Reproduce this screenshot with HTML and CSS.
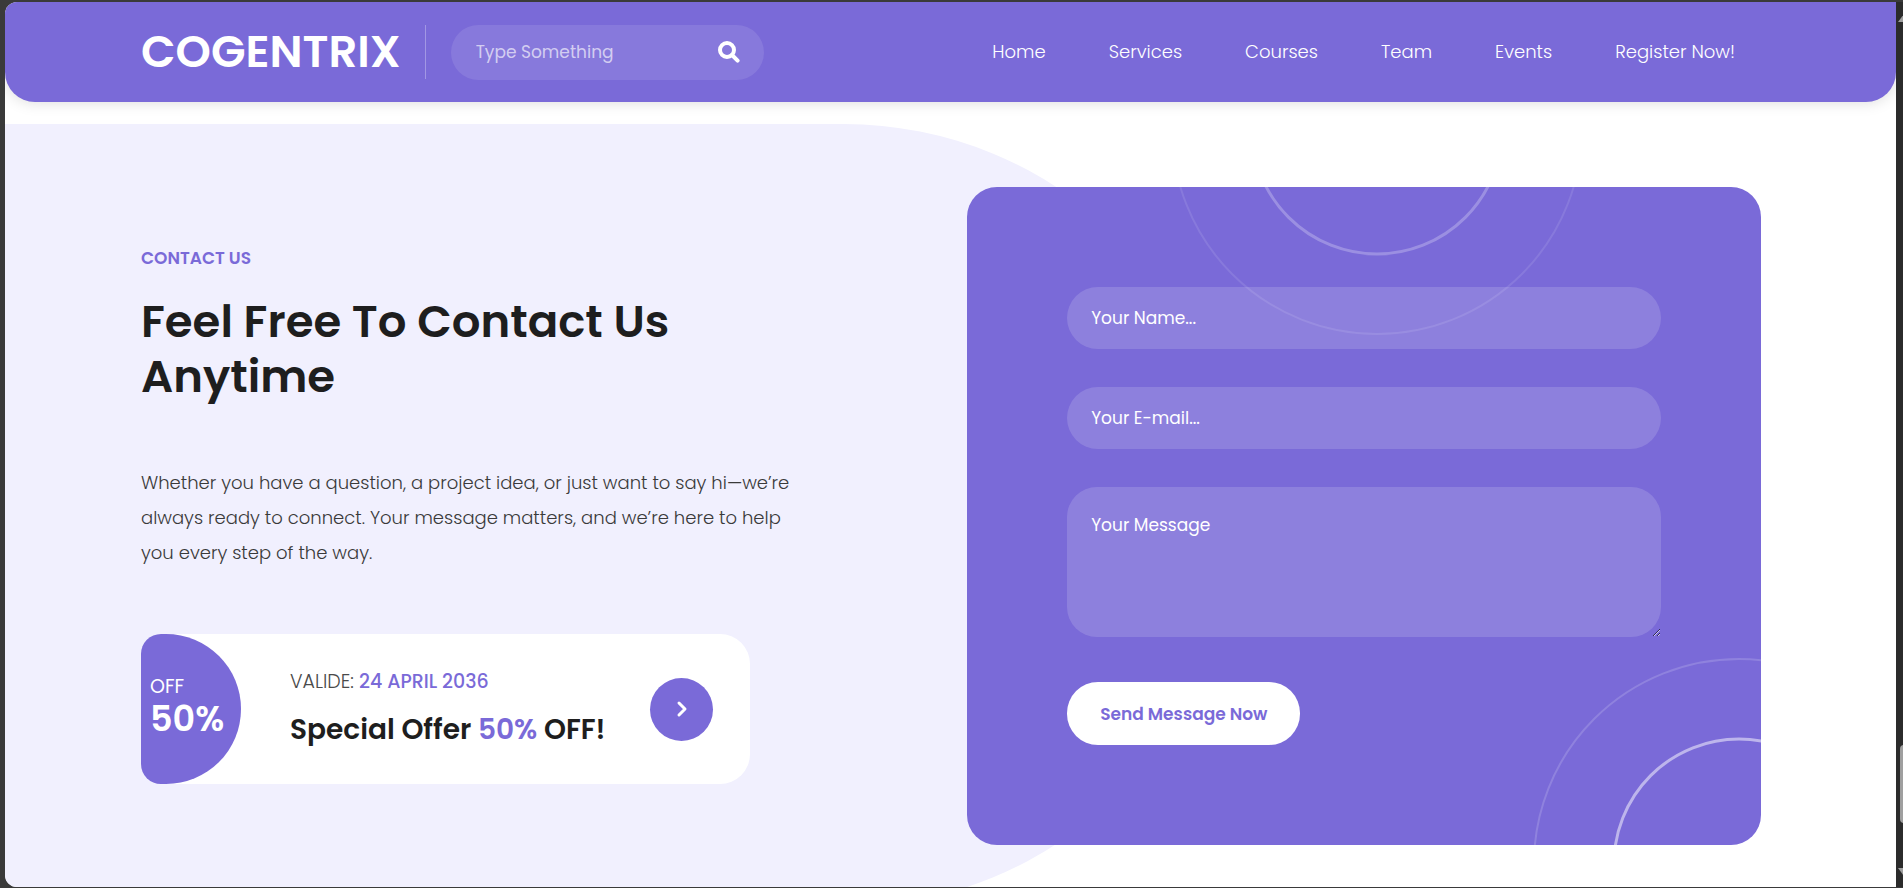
FILE: index.html
```html
<!DOCTYPE html>
<html lang="en">
<head>
<meta charset="utf-8">
<meta name="viewport" content="width=device-width, initial-scale=1">
<title>Cogentrix - Contact Us</title>
<link rel="stylesheet" href="styles.css">
</head>
<body>
<div class="frame">
  <div class="page">
    <header class="header">
      <a class="logo" href="#">COGENTRIX</a>
      <form class="search" role="search">
        <input class="search-input" type="text" placeholder="Type Something" aria-label="Type Something">
        <button class="search-button" type="button" aria-label="Search">
          <svg class="search-icon" viewBox="0 0 22 22" fill="none" stroke="currentColor" aria-hidden="true">
            <circle cx="9" cy="9" r="7" stroke-width="4"/>
            <path d="M14 14l5.6 5.6" stroke-width="4" stroke-linecap="round"/>
          </svg>
        </button>
      </form>
      <nav class="nav" aria-label="Main">
        <a href="#">Home</a>
        <a href="#">Services</a>
        <a href="#">Courses</a>
        <a href="#">Team</a>
        <a href="#">Events</a>
        <a href="#">Register Now!</a>
      </nav>
    </header>

    <main class="contact">
      <section class="intro">
        <h6 class="eyebrow">CONTACT US</h6>
        <h2 class="title">Feel Free To Contact Us Anytime</h2>
        <p class="text">Whether you have a question, a project idea, or just want to say hi—we’re always ready to connect. Your message matters, and we’re here to help you every step of the way.</p>
        <div class="offer">
          <div class="offer-badge">
            <span class="offer-off">OFF</span>
            <strong class="offer-percent">50%</strong>
          </div>
          <div class="offer-info">
            <p class="offer-valid">VALIDE: <em>24 APRIL 2036</em></p>
            <h4 class="offer-title">Special Offer <em>50%</em> OFF!</h4>
          </div>
          <a class="offer-link" href="#" aria-label="View offer">
            <svg class="offer-arrow" viewBox="0 0 12 18" fill="none" stroke="currentColor" stroke-width="3" stroke-linecap="round" stroke-linejoin="round" aria-hidden="true">
              <path d="M3 3l6 6-6 6"/>
            </svg>
          </a>
        </div>
      </section>

      <form class="card">
        <svg class="rings rings-top" viewBox="0 0 416 416" fill="none" stroke="#fff" aria-hidden="true">
          <circle cx="208" cy="208" r="205" stroke-width="2" opacity=".1"/>
          <circle cx="208" cy="208" r="125" stroke-width="3" opacity=".25"/>
        </svg>
        <svg class="rings rings-bottom" viewBox="0 0 416 416" fill="none" stroke="#fff" aria-hidden="true">
          <circle cx="208" cy="208" r="205" stroke-width="2" opacity=".16"/>
          <circle cx="208" cy="208" r="125" stroke-width="3" opacity=".5"/>
        </svg>
        <input class="field" type="text" placeholder="Your Name..." aria-label="Your Name">
        <input class="field" type="email" placeholder="Your E-mail..." aria-label="Your E-mail">
        <textarea class="field field-message" placeholder="Your Message" aria-label="Your Message"></textarea>
        <button class="send" type="button">Send Message Now</button>
      </form>
    </main>
  </div>

  <div class="scrollbar" aria-hidden="true">
    <svg class="scroll-arrow" viewBox="0 0 12 8"><path d="M6 0l6 8H0z"/></svg>
    <div class="scroll-thumb"></div>
    <svg class="scroll-arrow" viewBox="0 0 12 8"><path d="M6 8l6-8H0z"/></svg>
  </div>
</div>
</body>
</html>
```
FILE: styles.css
```css
:root {
  --brand: #7a6ad8;
  --tint: #f1f0fe;
  --dark: #1e1e1e;
  --grey: #4a4a4a;
  --frame: #3a3a3a;
}

* {
  box-sizing: border-box;
  margin: 0;
}

body {
  background: var(--frame);
  font-family: Poppins, Inter, "Liberation Sans", sans-serif;
  font-size: 17px;
}

a {
  color: inherit;
  text-decoration: none;
}

em {
  font-style: normal;
  color: var(--brand);
}

input,
textarea,
button {
  border: 0;
  font: inherit;
  outline: none;
}

.frame {
  display: grid;
  grid-template-columns: 1fr 7px;
  height: 100vh;
  padding: 2px 0 1px 5px;
}

.page {
  overflow: hidden;
  background: #fff;
  border-radius: 12px 0 0 12px;
}

/* Header */
.header {
  display: flex;
  align-items: center;
  height: 100px;
  padding: 0 161px 0 136px;
  background: var(--brand);
  border-radius: 0 0 30px 30px;
  box-shadow: 0 0 15px rgba(0, 0, 0, .15);
  color: #fff;
}

.logo {
  padding-right: 24px;
  border-right: 1px solid rgba(255, 255, 255, .3);
  font-size: 45px;
  font-weight: 600;
  line-height: 54px;
}

.search {
  display: flex;
  align-items: center;
  width: 313px;
  height: 55px;
  margin-left: 25px;
  padding: 0 24px 0 25px;
  background: rgba(255, 255, 255, .1);
  border-radius: 28px;
}

.search-input {
  flex: 1;
  min-width: 0;
  padding: 0;
  background: none;
  color: #fff;
}

.search-input::placeholder {
  color: rgba(255, 255, 255, .65);
}

.search-button {
  padding: 0;
  background: none;
  color: #fff;
}

.search-icon {
  display: block;
  width: 22px;
  height: 22px;
}

.nav {
  display: flex;
  gap: 63px;
  margin-left: auto;
  font-size: 18px;
  font-weight: 300;
  line-height: 26px;
}

/* Contact section */
.contact {
  position: relative;
  display: grid;
  grid-template-columns: 51fr 49fr;
  align-items: start;
  margin-top: 22px;
  padding: 63px 135px 62px 136px;
}

.contact::before {
  content: "";
  position: absolute;
  inset: 0 35% 0 0;
  background: var(--tint);
  border-radius: 0 390px 390px 0;
}

.intro {
  position: relative;
  max-width: 650px;
  padding-top: 59px;
}

.eyebrow {
  color: var(--brand);
  font-size: 17px;
  font-weight: 600;
  line-height: 24px;
}

.title {
  margin-top: 24px;
  color: var(--dark);
  font-size: 45px;
  font-weight: 600;
  line-height: 55px;
}

.text {
  margin-top: 61px;
  color: #3a3a3a;
  font-size: 18px;
  font-weight: 300;
  line-height: 35px;
}

.offer {
  display: flex;
  align-items: center;
  width: 609px;
  margin-top: 64px;
  padding-right: 37px;
  background: #fff;
  border-radius: 30px;
}

.offer-badge {
  display: flex;
  flex-direction: column;
  justify-content: center;
  width: 100px;
  height: 150px;
  padding: 0 0 5px 9px;
  background: var(--brand);
  border-radius: 20px 75px 75px 20px;
  color: #fff;
}

.offer-off {
  font-size: 19px;
  line-height: 24px;
}

.offer-percent {
  font-size: 35px;
  font-weight: 600;
  line-height: 40px;
}

.offer-info {
  flex: 1;
  margin-left: 49px;
  padding-bottom: 2px;
}

.offer-valid {
  color: var(--grey);
  font-size: 19px;
  font-weight: 300;
  line-height: 24px;
}

.offer-valid em {
  font-weight: 500;
}

.offer-title {
  margin-top: 19px;
  color: var(--dark);
  font-size: 28px;
  font-weight: 600;
  line-height: 34px;
}

.offer-link {
  display: grid;
  place-items: center;
  width: 63px;
  height: 63px;
  background: var(--brand);
  border-radius: 50%;
  color: #fff;
}

.offer-arrow {
  width: 12px;
  height: 18px;
}

/* Form card */
.card {
  position: relative;
  display: flex;
  flex-direction: column;
  gap: 38px;
  padding: 100px;
  overflow: hidden;
  background: var(--brand);
  border-radius: 30px;
}

.rings {
  position: absolute;
  width: 416px;
  height: 416px;
}

.rings-top {
  top: -266px;
  left: 202px;
}

.rings-bottom {
  right: -186px;
  bottom: -227px;
}

.field {
  position: relative;
  width: 100%;
  height: 62px;
  padding: 0 24px;
  background: rgba(255, 255, 255, .15);
  border-radius: 31px;
  color: #fff;
}

.field::placeholder {
  color: #fff;
}

.field-message {
  height: 150px;
  padding: 25px 24px;
  border-radius: 30px;
  line-height: 26px;
  resize: both;
}

.send {
  position: relative;
  align-self: flex-start;
  height: 63px;
  margin-top: 7px;
  padding: 0 33px;
  background: #fff;
  border-radius: 31px;
  color: var(--brand);
  font-weight: 600;
}

/* Browser scrollbar strip */
.scrollbar {
  position: relative;
  display: flex;
  flex-direction: column;
  justify-content: space-between;
  padding: 12px 0 11px 2px;
  overflow: hidden;
  background: #2b2b2b;
}

.scroll-arrow {
  width: 12px;
  height: 8px;
  fill: #9f9f9f;
}

.scroll-thumb {
  position: absolute;
  top: 84%;
  left: 4px;
  width: 8px;
  height: 78px;
  background: #9f9f9f;
  border-radius: 4px;
}
```
